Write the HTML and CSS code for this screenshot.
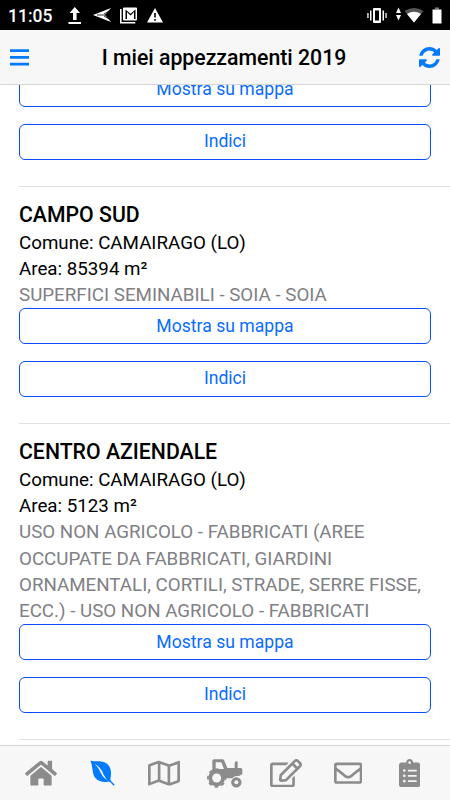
FILE: index.html
```html
<!DOCTYPE html>
<html lang="it">
<head>
<meta charset="utf-8">
<title>I miei appezzamenti 2019</title>
<link rel="stylesheet" href="styles.css">
</head>
<body>
<div class="statusbar">
  <span class="clock">11:05</span>
  <svg class="notices" viewBox="0 0 100 20" fill="#fff">
    <path d="M5 15V8H1.500L6.800 2 12 8H8.600v7zM.5 17h12.500v2H.5z"/>
    <path d="M25 10L43 3l-6 7 6 7z"/><path d="M29 10h14M36 9l7-4M36 11l7 4" stroke="#000" stroke-width=".8"/>
    <path d="M52.800 4v13.700h14.500" fill="none" stroke="#fff" stroke-width="1.600"/><path fill-rule="evenodd" d="M56 2.500h12q1 0 1 1v11q0 1-1 1H56q-1 0-1-1v-11q0-1 1-1zm1.500 2v9.500h1.500V7l3.500 3.500L66 7v7h1.500V4.500l-5 4.300z"/>
    <path fill-rule="evenodd" d="M87 3l8 14.500H79zM86.200 8v4.500h1.600V8zm0 6v1.800h1.600V14z"/>
  </svg>
  <svg class="signals" viewBox="0 0 78 20" fill="#fff">
    <path fill-rule="evenodd" d="M9 3h6q1 0 1 1v13q0 1-1 1H9q-1 0-1-1V4q0-1 1-1zm1 2.500v10h4v-10zM5 5.500h1.500v10H5zM2.300 8h1.300v5H2.300zM17.500 5.500H19v10h-1.500zM20.400 8h1.300v5h-1.300z"/>
    <path d="M33.500 2.500L36 8h-5zM33.500 15.500L36 10h-5z"/>
    <path d="M39.500 6q9.500-6 19 0L49 17.500z" fill="#555"/><path d="M42 9q7-4.500 14 0l-7 8.500z"/>
    <path d="M70 2.500h4v2h-4z" fill="#777"/><path d="M67.500 4.500h9V18.500h-9z"/>
  </svg>
</div>
<header class="navbar">
  <svg class="menu" viewBox="0 0 19 17" fill="#007aff"><path d="M0 .3h19v2.700H0zM0 7h19v2.700H0zM0 13.700h19v2.700H0z"/></svg>
  <h1>I miei appezzamenti 2019</h1>
  <svg class="refresh" viewBox="0 0 1536 1536" fill="#007aff"><path d="M1511 928q0 5-1 7-64 268-268 434.500T764 1536q-146 0-282.500-55T238 1324l-129 129q-19 19-45 19t-45-19-19-45V960q0-26 19-45t45-19h448q26 0 45 19t19 45-19 45l-137 137q71 66 161 102t187 36q134 0 250-65t186-179q11-17 53-117 8-23 30-23h192q13 0 22.500 9.500t9.500 22.500zm25-800v448q0 26-19 45t-45 19h-448q-26 0-45-19t-19-45 19-45l138-138Q969 256 768 256q-134 0-250 65T332 500q-11 17-53 117-8 23-30 23H50q-13 0-22.500-9.500T18 608v-7q65-268 270-434.500T768 0q146 0 284 55.500T1297 212l130-129q19-19 45-19t45 19 19 45z"/></svg>
</header>
<main class="content">
  <section class="plot first">
    <button>Mostra su mappa</button>
    <button>Indici</button>
  </section>
  <section class="plot">
    <h2>CAMPO SUD</h2>
    <p>Comune: CAMAIRAGO (LO)</p>
    <p>Area: 85394 m²</p>
    <p class="use">SUPERFICI SEMINABILI - SOIA - SOIA</p>
    <button>Mostra su mappa</button>
    <button>Indici</button>
  </section>
  <section class="plot">
    <h2>CENTRO AZIENDALE</h2>
    <p>Comune: CAMAIRAGO (LO)</p>
    <p>Area: 5123 m²</p>
    <p class="use">USO NON AGRICOLO - FABBRICATI (AREE OCCUPATE DA FABBRICATI, GIARDINI ORNAMENTALI, CORTILI, STRADE, SERRE FISSE, ECC.) - USO NON AGRICOLO - FABBRICATI</p>
    <button>Mostra su mappa</button>
    <button>Indici</button>
  </section>
</main>
<nav class="tabs">
  <a><svg width="32" height="28.400" viewBox="0 0 576 512"><path d="M280.370 148.260L96 300.110V464a16 16 0 0 0 16 16l112.060-.29a16 16 0 0 0 15.920-16V368a16 16 0 0 1 16-16h64a16 16 0 0 1 16 16v95.640a16 16 0 0 0 16 16.050L464 480a16 16 0 0 0 16-16V300L295.670 148.260a12.190 12.190 0 0 0-15.300 0zM571.600 251.470L488 182.560V44.050a12 12 0 0 0-12-12h-56a12 12 0 0 0-12 12v72.610L318.470 43a48 48 0 0 0-61 0L4.340 251.470a12 12 0 0 0-1.600 16.900l25.500 31A12 12 0 0 0 45.150 301l235.220-193.740a12.190 12.190 0 0 1 15.300 0L530.900 301a12 12 0 0 0 16.900-1.600l25.500-31a12 12 0 0 0-1.700-16.930z"/></svg></a>
  <a class="active"><svg width="25" height="26" viewBox="0 0 75 78"><path d="M1 2C16 5 38 0 52 12C64 23 65 41 61 57Q61 61 64 64L74 74L71 77L61 67Q57 63 53 65C41 68 26 65 17 55C5 42 10 20 1 2z"/><path class="vein" d="M13 11C25 17 33 26 38 37C41 46 46 53 52 60C43 55 38 50 33 40C28 28 23 20 13 11z"/></svg></a>
  <a><svg width="32" height="28.400" viewBox="0 0 576 512"><path d="M560.020 32c-1.960 0-3.980.37-5.960 1.160L384.010 96H384L212 35.280A64.252 64.252 0 0 0 191.760 32c-6.690 0-13.370 1.050-19.810 3.140L20.120 87.950A32.006 32.006 0 0 0 0 117.660v346.320C0 473.170 7.530 480 15.990 480c1.960 0 3.970-.37 5.960-1.160L192 416l172 60.710a63.980 63.980 0 0 0 40.050.15l151.830-52.810A31.996 31.996 0 0 0 576 394.340V48.020c0-9.190-7.530-16.020-15.980-16.020zM224 90.420l128 45.190v285.970l-128-45.190V90.420zM48 418.050V129.070l128-44.530v286.200l-.64.23L48 418.050zm480-35.130l-128 44.530V141.260l.64-.24L528 93.950v288.970z"/></svg></a>
  <a><svg width="36" height="29" viewBox="0 0 108 87"><path fill-rule="evenodd" d="M16 32V6q0-5 5-5h25q4 0 6 4l9 22h22V13q0-6 5-6h2q2 0 2 2v18h9q5 0 5 5v10q0 3-3 5l-7 4q-14-2-20 7H57L30 60 12 40zM26 10v20h25L43 10z"/><circle cx="29" cy="57" r="25"/><circle cx="29" cy="57" r="26.500" fill="none" stroke="#8c8c8c" stroke-width="5" stroke-dasharray="11 9.810" stroke-dashoffset="5"/><circle class="hub" cx="29" cy="57" r="13.500"/><circle cx="88" cy="70" r="15.500"/><circle class="hub" cx="88" cy="70" r="6"/></svg></a>
  <a><svg width="32" height="28.400" viewBox="0 0 576 512"><path d="M402.300 344.900l32-32c5-5 13.700-1.500 13.700 5.700V464c0 26.500-21.500 48-48 48H48c-26.500 0-48-21.500-48-48V112c0-26.500 21.500-48 48-48h273.500c7.100 0 10.700 8.600 5.700 13.700l-32 32c-1.500 1.500-3.500 2.300-5.700 2.300H48v352h352V350.500c0-2.100.8-4.100 2.300-5.600zm156.600-201.800L296.300 405.700l-90.400 10c-26.200 2.900-48.500-19.200-45.600-45.600l10-90.400L432.900 17.100c22.900-22.900 59.900-22.900 82.700 0l43.200 43.200c22.900 22.900 22.900 60 .1 82.800zM460.100 174L402 115.900 216.200 301.800l-7.300 65.300 65.300-7.300L460.100 174zm64.800-79.700l-43.200-43.200c-4.100-4.100-10.800-4.100-14.800 0L436 82l58.100 58.100 30.900-30.900c4-4.200 4-10.800-.1-14.900z"/></svg></a>
  <a><svg width="28.400" height="28.400" viewBox="0 0 512 512"><path d="M464 64H48C21.490 64 0 85.490 0 112v288c0 26.510 21.490 48 48 48h416c26.510 0 48-21.490 48-48V112c0-26.510-21.490-48-48-48zm0 48v40.805c-22.422 18.259-58.168 46.651-134.587 106.490-16.841 13.247-50.201 45.072-73.413 44.701-23.208.375-56.579-31.459-73.413-44.701C106.180 199.465 70.425 171.067 48 152.805V112h416zM48 400V214.398c22.914 18.251 55.409 43.862 104.938 82.646 21.857 17.205 60.134 55.186 103.062 54.955 42.717.231 80.509-37.199 103.053-54.947 49.528-38.783 82.032-64.401 104.947-82.653V400H48z"/></svg></a>
  <a><svg width="21.300" height="28.400" viewBox="0 0 384 512"><path fill-rule="evenodd" d="M336 64h-80c0-35.300-28.700-64-64-64s-64 28.700-64 64H48C21.500 64 0 85.500 0 112v352c0 26.500 21.500 48 48 48h288c26.500 0 48-21.500 48-48V112c0-26.500-21.500-48-48-48zM96 424a24 24 0 1 1 0-48 24 24 0 0 1 0 48zm0-96a24 24 0 1 1 0-48 24 24 0 0 1 0 48zm0-96a24 24 0 1 1 0-48 24 24 0 0 1 0 48zM192 40a24 24 0 1 1 0 48 24 24 0 0 1 0-48zM168 384h144q8 0 8 8v16q0 8-8 8H168q-8 0-8-8v-16q0-8 8-8zm0-96h144q8 0 8 8v16q0 8-8 8H168q-8 0-8-8v-16q0-8 8-8zm0-96h144q8 0 8 8v16q0 8-8 8H168q-8 0-8-8v-16q0-8 8-8z"/></svg></a>
</nav>
</body>
</html>
```
FILE: styles.css
```css
* { box-sizing: border-box; }
body {
  margin: 0;
  height: 800px;
  overflow: hidden;
  display: flex;
  flex-direction: column;
  background: #fff;
  color: #000;
  font-family: Roboto, "Liberation Sans", sans-serif;
}
.statusbar {
  flex: none;
  height: 30px;
  padding: 0 7px 0 8px;
  display: flex;
  align-items: center;
  background: #000;
  color: #fff;
}
.clock { width: 60px; padding-top: 1px; font-size: 17.5px; font-weight: 500; }
.notices { width: 100px; height: 20px; }
.signals { width: 78px; height: 20px; margin-left: auto; }
.navbar {
  flex: none;
  height: 55px;
  padding: 0 10px;
  display: flex;
  align-items: center;
  justify-content: space-between;
  background: #f7f7f7;
  border-bottom: 1px solid #d6d6d6;
}
.menu { width: 19px; height: 17px; }
.refresh { width: 21px; height: 21px; }
h1 { margin: 0; font-size: 21.25px; font-weight: 500; }
.content { flex: 1; min-height: 0; overflow: hidden; }
.plot {
  margin-left: 19px;
  padding: 13.9px 19px 26.2px 0;
  border-bottom: 1px solid #e0e0e0;
  font-size: 18.75px;
  line-height: 26.25px;
}
.first { padding-top: 0; margin-top: -14px; }
h2 { margin: 0 0 2px; font-size: 21.25px; line-height: 27px; font-weight: 500; }
p { margin: 0; }
.use { color: #808085; }
button {
  display: block;
  width: 100%;
  height: 36px;
  padding: 0 0 1px;
  border: 1px solid #0a4cff;
  border-radius: 6px;
  background: #fff;
  color: #0a6cff;
  font: 17.6px Roboto, "Liberation Sans", sans-serif;
}
button + button { margin-top: 16.5px; }
.tabs {
  flex: none;
  height: 55px;
  padding: 0 10px;
  display: grid;
  grid-template-columns: repeat(7, 1fr);
  background: #f7f7f7;
  border-top: 1px solid #d6d6d6;
}
.tabs a { display: flex; align-items: center; justify-content: center; fill: #8c8c8c; }
.tabs .active { fill: #007aff; }
.tabs .hub, .tabs .vein { fill: #f7f7f7; }
```
